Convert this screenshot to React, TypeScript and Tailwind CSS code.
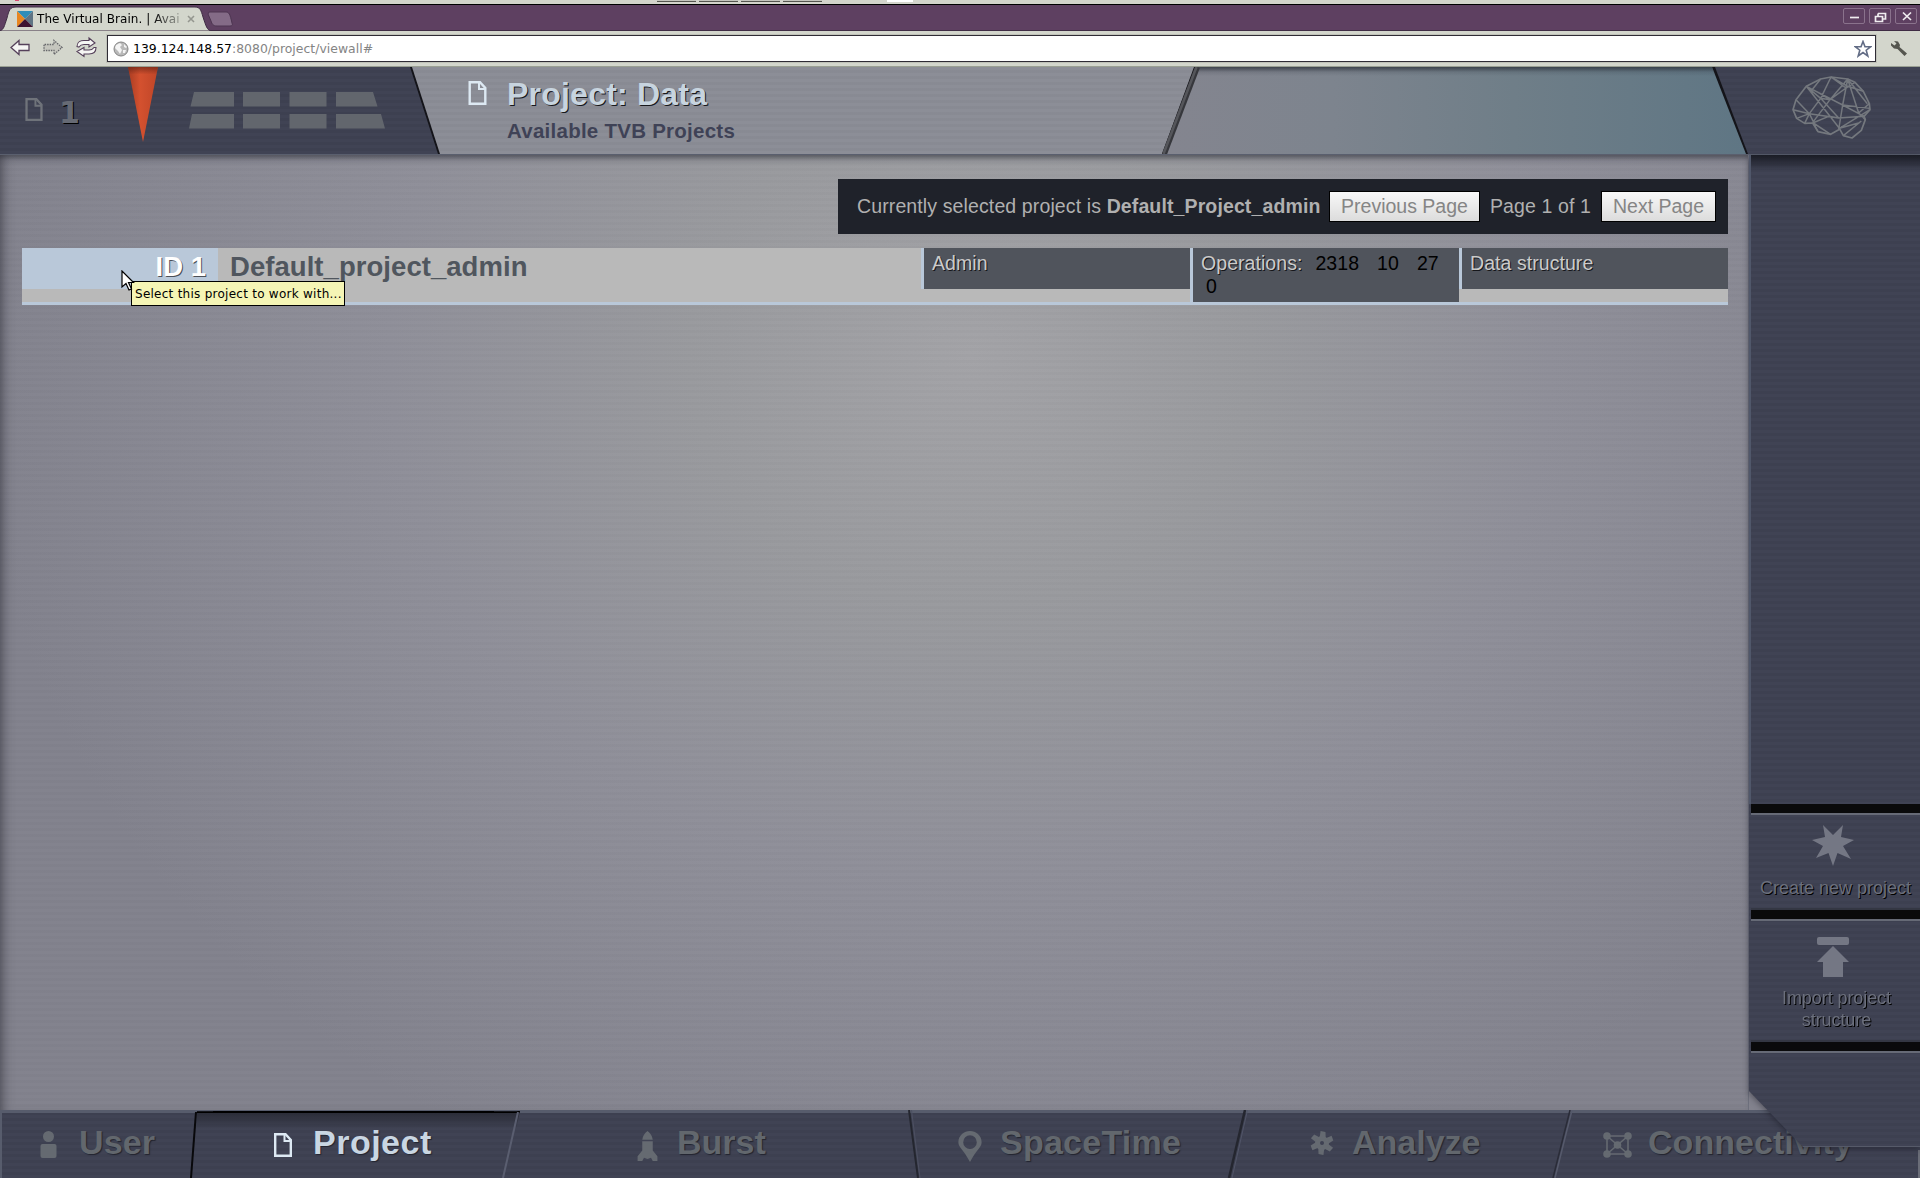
import React from 'react';

const stripes = 'bg-[repeating-linear-gradient(0deg,rgba(255,255,255,0.01)_0px,rgba(255,255,255,0.01)_3px,rgba(0,0,0,0.02)_3px,rgba(0,0,0,0.02)_6px)]';

function DocIcon({ className }: { className: string }) {
  return (
    <svg viewBox="0 0 18 24" className={className} fill="none" stroke="currentColor" strokeWidth="2.4">
      <path d="M1.2 1.2H11.5L16.8 7V22.8H1.2Z" />
      <path d="M10.5 1.5V8H16.5" strokeWidth="2" />
    </svg>
  );
}

function BrowserChrome() {
  return (
    <div className="h-[67px] shrink-0 bg-[#d3d6cc] font-['DejaVu_Sans',sans-serif]">
      <div className="relative h-[5px] border-b border-black bg-[#d3d4cb]">
        <div className="absolute left-[657px] top-0 flex gap-[3px]">
          {[0, 1, 2, 3].map((i) => (
            <span key={i} className="h-[2px] w-[39px] border-b border-[#55564f] bg-[#c4c5bd]" />
          ))}
        </div>
        <span className="absolute left-[887px] top-0 h-[2px] w-[26px] bg-white" />
        <span className="absolute left-[15px] top-0 h-px w-[4px] bg-[#d84a70]" />
      </div>
      <div className="relative flex h-[26px] border-b border-[#3f2c44] bg-[#5e4061]">
        <svg width="240" height="26" className="absolute left-0 top-0">
          <path d="M0 26C4 24 4 22 7 13C9 5 10 2 16 2H195C200 2 201 5 203 12C206 21 207 25 211 26Z" fill="#d3d6cc" stroke="#3f2c44" strokeWidth="1" />
          <path d="M209 7H226C229 7 230 9 232 18C233 20 232 21 230 21H217C213 21 212 19 211 16L208 9Z" fill="#846b87" stroke="#4c3450" strokeWidth="1" />
        </svg>
        <div className="relative flex h-[27px] w-[205px] items-center pl-[17px]">
          <svg width="16" height="16" viewBox="0 0 16 16" className="mt-[1px]">
            <path d="M0 0H16L8 8Z" fill="#2f8db8" />
            <path d="M0 0L8 8L0 16Z" fill="#e8851f" />
            <path d="M16 0V16L8 8Z" fill="#5f7484" />
            <path d="M0 16L8 8L16 16Z" fill="#3d1230" />
          </svg>
          <span className="ml-[4px] w-[146px] overflow-hidden whitespace-nowrap bg-[linear-gradient(90deg,#000_115px,#c4c7be_150px)] bg-clip-text text-[12px] leading-[16px] tracking-[0.05px] text-transparent">The Virtual Brain. | Avai</span>
          <svg width="8" height="8" viewBox="0 0 8 8" className="ml-[4px]" stroke="#94968f" strokeWidth="1.6">
            <path d="M1 1L7 7M7 1L1 7" />
          </svg>
        </div>
        <div className="ml-auto flex gap-[4px] pr-[3px] pt-[3px]">
          {['M6 9.5H15', 'M8 5.500H15.500V11H12.500M5.500 8.500H12.500V13.500H5.500Z M8 5.500V8', 'M7 4.500L15 12M15 4.500L7 12'].map((d) => (
            <span key={d} className="flex h-4 w-[22px] items-center justify-center rounded-[2px] border border-[#8a728c]">
              <svg width="21" height="16" viewBox="0 0 21 16" className="shrink-0" fill="none" stroke="#f0ecf0" strokeWidth="1.7">
                <path d={d} />
              </svg>
            </span>
          ))}
        </div>
      </div>
      <div className="flex h-9 items-start border-b border-[#9aa093] pt-[4px]">
        <svg width="107" height="27" viewBox="0 0 107 27" fill="#f6f6f4" stroke="#55405a" strokeWidth="1.300">
          <path d="M11 12.500L19 5.500V9.500H29V15.500H19V19.500Z" />
          <path d="M62 12.500L54 5.500V9.500H44V15.500H54V19.500Z" fill="#c5c6be" stroke="#65666a" strokeDasharray="1.500 1" />
          <path d="M77 11.500C77 7 81 5.500 84 5.500H89V3L95 8L89 12V9.500H84C81 9.500 80 10.500 79 12Z" strokeWidth="1.100" />
          <path d="M96 12.500C96 18 92 19 89 19H84V21.500L77 16.500L84 12.500V15H89C92 15 93 14 94 12.500Z" strokeWidth="1.100" />
        </svg>
        <div className="flex h-[27px] w-[1769px] items-center border border-[#2f2c35] bg-white pl-[5px] pr-[3px] shadow-[0_0_0_1px_#c0c2b9]">
          <svg width="16" height="16" viewBox="0 0 16 16">
            <circle cx="8" cy="8" r="7" fill="#b9b9b9" stroke="#858585" />
            <path d="M3 4L7 2L9 4L7 6L9 9L7 13L5 10L2 7ZM11 3L14 6L13 7L11 6ZM10 9L13 9L12 12L10 12Z" fill="#f4f4f4" />
          </svg>
          <span className="ml-[4px] whitespace-nowrap text-[12.400px] leading-4 tracking-[0.03px] text-[#848484]"><span className="text-black">139.124.148.57</span>:8080/project/viewall#</span>
          <svg width="18" height="18" viewBox="0 0 18 18" className="ml-auto" fill="#fff" stroke="#626c85" strokeWidth="1.600">
            <path d="M9 1.500L11 6.800H16.500L12.200 10.200L13.800 16L9 12.600L4.200 16L5.800 10.200L1.500 6.800H7Z" />
          </svg>
        </div>
        <svg width="18" height="18" viewBox="0 0 18 18" className="ml-[14px] mt-[5px]">
          <path d="M4 1L8 1.500L10 5L9.500 7L17 13.500L14.500 16L7.500 9L4 8.500L1 5.500V3L4.500 5.500L6.500 3.500Z" fill="#55564f" />
        </svg>
      </div>
    </div>
  );
}

function Header() {
  return (
    <header className="relative flex h-[87px] shrink-0 bg-[#141419]">
      <div className={`flex w-[439px] bg-[#3e4152] [clip-path:polygon(0_0,410px_0,438px_100%,0_100%)] ${stripes}`}>
        <DocIcon className="ml-[25px] mt-[31px] h-[23px] w-[18px] text-[#6f737a]" />
        <span className="ml-[16px] mt-[27px] w-[25px] font-['DejaVu_Sans',sans-serif] text-[30px] font-bold leading-[38px] text-[#666a74] [text-shadow:1px_1px_0_#000]">1</span>
        <svg width="30" height="77" viewBox="0 0 30 77" className="ml-[44px]">
          <defs>
            <linearGradient id="needle" x1="0" x2="1" y1="0" y2="0">
              <stop offset="0" stopColor="#a93c22" />
              <stop offset="0.4" stopColor="#d4512f" />
              <stop offset="1" stopColor="#bf4628" />
            </linearGradient>
            <linearGradient id="needleTop" x1="0" x2="0" y1="0" y2="1">
              <stop offset="0" stopColor="#5a1f14" stopOpacity="0.6" />
              <stop offset="0.1" stopColor="#5a1f14" stopOpacity="0" />
            </linearGradient>
          </defs>
          <path d="M0 0H30L15 75Z" fill="url(#needle)" />
          <path d="M0 0H30L15 75Z" fill="url(#needleTop)" />
        </svg>
        <svg width="196" height="37" viewBox="0 0 196 37" className="ml-[31px] mt-[25px]" fill="#62666d">
          <path d="M5 0H45V14.500H1.500ZM54 0H91V14.500H54ZM100.500 0H137.500V14.500H100.500ZM147 0H184L188.500 14.500H147Z" />
          <path d="M3 22H45V36.500H0ZM54 22H91V36.500H54ZM100.500 22H137.500V36.500H100.500ZM147 22H192L196 36.500H147Z" />
        </svg>
      </div>
      <div className={`-ml-[27px] flex w-[785px] bg-[#8b8d96] [clip-path:polygon(0_0,782px_0,750px_100%,28px_100%)] ${stripes}`}>
        <DocIcon className="ml-[56px] mt-[14px] h-[24px] w-[19px] text-[#dde9f3]" />
        <div className="ml-[20px] whitespace-nowrap font-['Liberation_Sans',Arial,sans-serif] font-bold">
          <h1 className="mt-[8px] text-[32px] leading-[38px] tracking-[0.22px] text-[#c7d4df] [text-shadow:1px_1px_0_#17181d]">Project: Data</h1>
          <h2 className="mt-[6px] text-[20.500px] leading-[24px] tracking-[0.25px] text-[#3f4256]">Available TVB Projects</h2>
        </div>
      </div>
      <div className="-ml-[33px] w-[584px] bg-[linear-gradient(180deg,rgba(40,45,55,0.75)_0px,rgba(40,45,55,0.15)_5px,transparent_9px),linear-gradient(90deg,#84858f_0px,#7d848e_170px,#6f7e88_350px,#5f7684_580px)] [clip-path:polygon(32px_0,548px_0,582px_100%,0_100%)]" />
      <div className={`-ml-[35px] flex-1 bg-[#3e4152] [clip-path:polygon(2px_0,100%_0,100%_100%,35px_100%)] ${stripes}`}>
        <svg width="80" height="64" viewBox="36 26 240 192" className="ml-[79px] mt-[8px]" fill="none" stroke="#74787e" strokeWidth="5" strokeLinejoin="round">
          <path d="M39 130L48 100L79 60L122 38L153 32L203 38L225 48L250 75L268 112L270 130L252 150L256 160L244 192L216 215L190 208L178 186L176 190L152 204L114 196L98 170L74 171L50 156Z" />
          <path d="M79 60L188 116L268 126M79 60L150 150L178 186M48 100L88 142L74 171M39 130L88 142L100 166M50 156L88 142L122 96L153 32M122 38L98 68M79 60L122 96L150 100L203 38M150 100L100 166M150 100L114 78M153 32L203 60L250 75M203 38L188 116L176 190M203 38L198 65L150 100M203 38L236 140M225 48L198 65M203 38L262 112M153 32L198 65M88 142L176 155L252 150M122 96L176 155M98 170L146 150L176 155M188 116L252 150M270 130L178 186M268 112L236 140L256 160M178 186L236 170M190 208L244 164M114 196L100 170L152 204" strokeWidth="4.500" />
        </svg>
      </div>
      <svg width="50" height="87" className="absolute left-[1158px] top-0">
        <path d="M39.500 0L6.500 87" stroke="#36373c" strokeWidth="5" />
        <path d="M38.500 0L5.500 87" stroke="#55565b" strokeWidth="2.500" />
      </svg>
    </header>
  );
}

function ProjectRow() {
  const cell = 'border-l-[3px] border-[#b9c8d9] bg-[#50545c] px-2 text-[19.5px] leading-[23px] tracking-[0.06px] text-[#cbcbcb] [text-shadow:1px_1px_0_#15161a]';
  return (
    <div className="relative mt-[14px] flex h-[57px] items-start border-b-[3px] border-[#b9c8d9] bg-[#b9b9b9]">
      <div className="h-[41px] w-[196px] bg-[#b9c8d9] pr-[12px] text-right text-[27.500px] font-bold leading-[37px] text-white [text-shadow:1px_1px_0_#4b5058]">ID 1</div>
      <div className="w-[703px] pl-[12px] text-[27.500px] font-bold leading-[37px] tracking-[0.05px] text-[#50565e]">Default_project_admin</div>
      <div className={`h-[41px] w-[269px] pt-[4px] ${cell}`}>Admin</div>
      <div className={`h-[54px] w-[269px] pt-[4px] ${cell}`}>
        Operations:
        <span className="ml-[13px] text-black [text-shadow:none]">2318<span className="ml-[18px]">10</span><span className="ml-[18px]">27</span></span>
        <div className="pl-[5px] text-black [text-shadow:none]">0</div>
      </div>
      <div className={`h-[41px] w-[269px] pt-[4px] ${cell}`}>Data structure</div>
      <div className="absolute left-[109px] top-[33px] h-[25px] w-[214px] whitespace-nowrap border border-black bg-[#f5f5b5] pl-[3px] font-['DejaVu_Sans',sans-serif] text-[12px] leading-[24px] tracking-[0.26px] text-black">Select this project to work with...</div>
      <svg width="14" height="22" viewBox="0 0 14 22" className="absolute left-[99px] top-[22px]">
        <path d="M1 1V17L5 13.500L8 20L10.500 19L7.500 12.500H12.500Z" fill="#fff" stroke="#000" strokeWidth="1.200" />
      </svg>
    </div>
  );
}

function Content() {
  const btn = 'h-[29px] whitespace-nowrap bg-[linear-gradient(180deg,#f8f8f8,#dcdcdc)] text-center leading-[27px] tracking-normal text-[#858585] shadow-[0_0_0_1px_#000]';
  return (
    <main className="w-[1749px] border-r border-[#6d6f7c] bg-[repeating-linear-gradient(0deg,rgba(255,255,255,0.008)_0px,rgba(255,255,255,0.008)_3px,rgba(0,0,0,0.012)_3px,rgba(0,0,0,0.012)_6px),radial-gradient(ellipse_1000px_900px_at_970px_200px,#a3a3a7_0%,#999a9e_28%,#8f8f99_58%,#82828d_100%)] pl-[22px] pr-[20px] pt-[24px] font-['Liberation_Sans',Arial,sans-serif] shadow-[inset_10px_0_12px_-8px_rgba(50,50,60,0.7),inset_0_8px_9px_-7px_rgba(30,32,42,0.8)]">
      <div className="ml-auto flex h-[55px] w-[890px] items-center whitespace-nowrap bg-[#1f222a] pl-[19px] text-[19.500px] tracking-[0.12px] text-[#b0b0b0]">
        <span>Currently selected project is <b>Default_Project_admin</b></span>
        <button className={`ml-auto w-[149px] ${btn}`}>Previous Page</button>
        <span className="mx-[10px] w-[103px] text-center">Page 1 of 1</span>
        <button className={`mr-[13px] w-[113px] ${btn}`}>Next Page</button>
      </div>
      <ProjectRow />
    </main>
  );
}

function Sidebar() {
  const label = "text-center font-['Liberation_Sans',Arial,sans-serif] text-[18px] leading-[22px] text-[#6b6f7c] [text-shadow:1px_1px_0_#000]";
  return (
    <div className="relative z-10 -mb-[37px] w-[171px] shrink-0 drop-shadow-[0_2px_3px_rgba(10,10,20,0.4)]">
      <aside className={`flex h-full flex-col bg-[#3e4152] [clip-path:polygon(0_0,100%_0,100%_100%,54px_100%,0_936px)] ${stripes}`}>
        <div className="h-[649px] border-l-2 border-[#50576a] bg-[linear-gradient(180deg,#1a1c25_0px,transparent_16px)]" />
        <div className="ml-[2px] h-[106px] border-b-2 border-t-[9px] border-b-[#343743] border-t-[#0a0a0b]">
          <div className="h-full border-t-2 border-[#666a76] pt-[8px]">
            <svg width="44" height="44" viewBox="-22 -22 44 44" className="mx-auto block translate-x-[-3px]" fill="#747784">
              <path d="M0 21L-4.500 8L-17 13L-10 1L-21 -5L-8 -8L-10 -20L0 -10L10 -20L8 -8L21 -5L10 1L18 14L4.500 8Z" />
            </svg>
            <div className={`mt-[10px] whitespace-nowrap ${label}`}>Create new project</div>
          </div>
        </div>
        <div className="ml-[2px] h-[132px] border-b-2 border-t-[9px] border-b-[#343743] border-t-[#0a0a0b]">
          <div className="h-full border-t-2 border-[#666a76] pt-[15px]">
            <svg width="34" height="42" viewBox="0 0 34 42" className="mx-auto block translate-x-[-3px]" fill="#747784">
              <rect x="1" y="1" width="32" height="8" rx="2" />
              <path d="M17 10L33 26H27V41H7V26H1Z" />
            </svg>
            <div className={`mx-auto mt-[9px] w-[130px] translate-x-[1px] tracking-[-0.08px] ${label}`}>Import project structure</div>
          </div>
        </div>
        <div className="ml-[2px] h-[11px] border-b-2 border-t-[9px] border-b-[#666a76] border-t-[#0a0a0b]" />
        <div className="flex-1 border-b border-[#565a69]" />
      </aside>
    </div>
  );
}

function Label({ text, className, active }: { text: string; className: string; active?: boolean }) {
  const tone = active ? 'text-[#c9d6e2]' : 'text-[#62676d]';
  return (
    <span className={`whitespace-nowrap font-['Liberation_Sans',Arial,sans-serif] text-[34px] font-bold leading-[38px] [text-shadow:1px_1px_1px_#22242f] ${tone} ${className}`}>{text}</span>
  );
}

function Footer() {
  return (
    <footer className={`relative flex h-[68px] shrink-0 border-t-[3px] border-[#575c6c] bg-[#3e4152] ${stripes}`}>
      <a className="flex w-[194px] items-start border-l-2 border-[#575c6c] pl-[38px] pt-[10px]">
        <svg width="17" height="28" viewBox="0 0 17 28" className="mt-[8px]" fill="#656a71">
          <circle cx="8.500" cy="5.500" r="5.500" />
          <rect x="0.500" y="13" width="16" height="14" rx="2" />
        </svg>
        <Label text="User" className="ml-[22px] tracking-[0.15px]" />
      </a>
      <a className="-mt-[2px] flex w-[326px] items-start bg-[linear-gradient(180deg,#000_0px,#000_2px,#2b2d38_2px,transparent_18px)] pl-[80px] pt-[12px] [clip-path:polygon(3px_0,100%_0,312px_100%,0_100%)]">
        <DocIcon className="mt-[10px] h-[24px] w-[18px] text-[#dde9f3]" />
        <Label text="Project" className="ml-[21px] tracking-[0.5px]" active />
      </a>
      <a className="flex w-[396px] items-start pl-[117px] pt-[10px]">
        <svg width="21" height="31" viewBox="0 0 18 32" preserveAspectRatio="none" className="mt-[8px]" fill="#656a71">
          <path d="M9 0C6.500 2 5 5 4.500 9H13.500C13 5 11.500 2 9 0Z" />
          <path d="M4.500 10.500H13.500V20L17.500 26V31L13.500 31L12 27.500L9 29L6 27.500L4.500 31H0.500V26L4.500 20Z" />
        </svg>
        <Label text="Burst" className="ml-[19px]" />
      </a>
      <a className="flex w-[330px] items-start pl-[42px] pt-[10px]">
        <svg width="24" height="31" viewBox="0 0 24 32" className="mt-[8px]" fill="#656a71">
          <path fillRule="evenodd" d="M12 0C18 0 24 4.500 24 11.500C24 17 18 20 12 32C6 20 0 17 0 11.500C0 4.500 6 0 12 0ZM12 4.500A7 7 0 1 0 12 18.500A7 7 0 1 0 12 4.500Z" />
        </svg>
        <Label text="SpaceTime" className="ml-[18px] tracking-[0.25px]" />
      </a>
      <a className="flex w-[326px] items-start pl-[64px] pt-[10px]">
        <svg width="24" height="24" viewBox="-12 -12 24 24" className="mt-[8px]" fill="#656a71">
          {[10, 70, 130, 190, 250, 310].map((r) => (
            <path key={r} d="M-3 0L-3.500 -11.500H1.500L4 0Z" transform={`rotate(${r})`} />
          ))}
          <circle r="7" />
          <circle r="2" fill="#3e4152" />
        </svg>
        <Label text="Analyze" className="ml-[18px]" />
      </a>
      <a className="flex flex-1 items-start pl-[31px] pt-[10px]">
        <svg width="29" height="26" viewBox="0 0 29 26" className="mt-[9px]" fill="#656a71" stroke="#656a71" strokeWidth="2">
          <path d="M4 4H25V22H4ZM4 4L25 22M25 4L4 22" fill="none" strokeWidth="1.600" />
          {[[4, 4], [25, 4], [4, 22], [25, 22], [14.5, 13]].map(([x, y]) => (
            <circle key={`${x}-${y}`} cx={x} cy={y} r="2.800" />
          ))}
        </svg>
        <Label text="Connectivity" className="ml-[16px] tracking-[0.05px]" />
      </a>
      <svg width="1920" height="68" className="pointer-events-none absolute -top-[3px] left-0" fill="none">
        <path d="M196 2L191 68" stroke="#08080b" strokeWidth="2" />
        <path d="M197 1.500H213M494 1.500H517" stroke="#14151a" />
        <path d="M518 2L503 68" stroke="#5a5e70" strokeWidth="2" />
        <path d="M909 0L918 68" stroke="#24262f" strokeWidth="2" />
        <path d="M911.500 0L920 68" stroke="#4d5062" />
        <path d="M1245 0L1229 68" stroke="#24262f" strokeWidth="2.500" />
        <path d="M1247.500 0L1232 68" stroke="#515568" />
        <path d="M1570 0L1553 68" stroke="#2a2c38" strokeWidth="1.500" />
        <path d="M1572 0L1555 68" stroke="#565a6c" strokeWidth="1.500" />
        <path d="M1919 40V68" stroke="#6a6d78" strokeWidth="2" />
      </svg>
    </footer>
  );
}

export default function App() {
  return (
    <div className="flex h-[1178px] w-[1920px] flex-col overflow-hidden bg-[#3e4152]">
      <BrowserChrome />
      <Header />
      <div className="flex min-h-0 flex-1 border-t border-[#5a5f6e] bg-[#82828d]">
        <Content />
        <Sidebar />
      </div>
      <Footer />
    </div>
  );
}
